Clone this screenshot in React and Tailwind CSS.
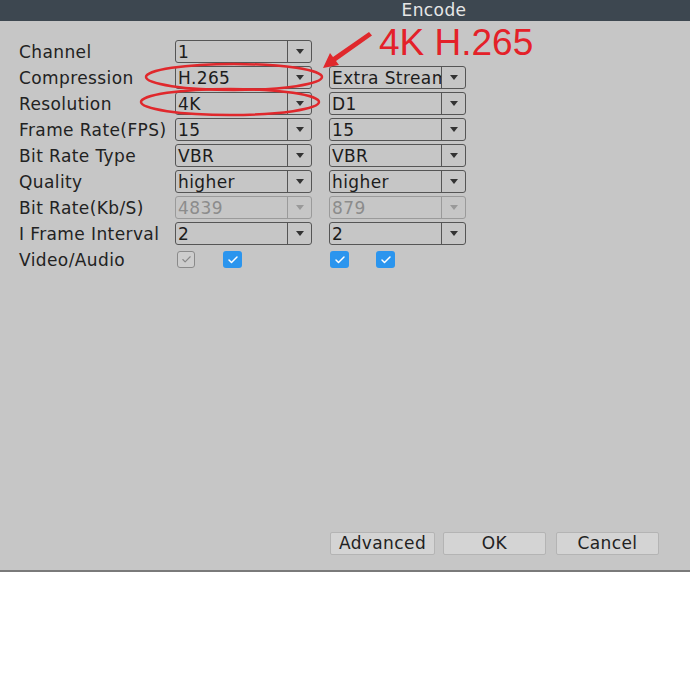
import { Check } from 'lucide-react'

const font = { fontFamily: '"DejaVu Sans", Verdana, sans-serif' }

const rows = [
  { label: 'Channel', a: '1', b: null },
  { label: 'Compression', a: 'H.265', b: 'Extra Stream' },
  { label: 'Resolution', a: '4K', b: 'D1' },
  { label: 'Frame Rate(FPS)', a: '15', b: '15' },
  { label: 'Bit Rate Type', a: 'VBR', b: 'VBR' },
  { label: 'Quality', a: 'higher', b: 'higher' },
  { label: 'Bit Rate(Kb/S)', a: '4839', b: '879', disabled: true },
  { label: 'I Frame Interval', a: '2', b: '2' },
]

function Select({ value, disabled }) {
  return (
    <div
      className={`flex h-[23px] w-[137px] rounded-[3px] border ${
        disabled ? 'border-[#9a9a9a] text-[#8c8c8c]' : 'border-[#555] text-[#1c1c1c]'
      }`}
    >
      <div className="flex-1 overflow-hidden whitespace-nowrap pl-[2px] leading-[22px]">{value}</div>
      <div
        className={`flex w-[24px] items-center justify-center border-l ${
          disabled ? 'border-[#9a9a9a]' : 'border-[#555]'
        }`}
      >
        <svg width="8" height="5" viewBox="0 0 8 5">
          <path d="M0 0 L8 0 L4 5 Z" fill={disabled ? '#999' : '#333'} />
        </svg>
      </div>
    </div>
  )
}

function Box({ on }) {
  return on ? (
    <div className="flex h-[17px] w-[19px] items-center justify-center rounded-[3px] bg-[#2b95ee]">
      <Check className="h-[12px] w-[12px] text-white" strokeWidth={3} />
    </div>
  ) : (
    <div className="flex h-[17px] w-[18px] items-center justify-center rounded-[3px] border border-[#8a8a8a] bg-[#cdcdcd]">
      <Check className="h-[11px] w-[11px] text-[#888]" strokeWidth={2.5} />
    </div>
  )
}

export default function App() {
  return (
    <div className="relative h-[690px] w-[690px] bg-white text-[17px] tracking-[0.4px]" style={font}>
      <div className="flex h-[21px] items-center justify-center bg-[#3d4750] pl-[178px] text-[17px] leading-none text-[#e6e6e6]">
        Encode
      </div>

      <div className="flex h-[549px] flex-col bg-[#c6c6c6] pt-[19px]">
        <div className="flex flex-col gap-[3px]">
          {rows.map((r) => (
            <div key={r.label} className="flex h-[23px] items-center">
              <div className="w-[175px] pl-[19px] leading-[24px] text-[#222]">{r.label}</div>
              <Select value={r.a} disabled={r.disabled} />
              {r.b && (
                <div className="ml-[17px]">
                  <Select value={r.b} disabled={r.disabled} />
                </div>
              )}
            </div>
          ))}
          <div className="flex h-[23px] items-center">
            <div className="w-[175px] pl-[19px] leading-[24px] text-[#222]">Video/Audio</div>
            <div className="flex w-[137px] gap-[28px] pl-[2px]">
              <Box on={false} />
              <Box on />
            </div>
            <div className="ml-[17px] flex gap-[27px] pl-[1px]">
              <Box on />
              <Box on />
            </div>
          </div>
        </div>

        <div className="flex-1" />

        <div className="flex justify-end pb-[15px] pr-[31px] text-[#222]">
          <button className="h-[23px] w-[105px] rounded-[2px] border border-[#b4b4b4] bg-[#d4d4d4] leading-none">
            Advanced
          </button>
          <button className="ml-[8px] h-[23px] w-[103px] rounded-[2px] border border-[#b4b4b4] bg-[#d4d4d4] leading-none">
            OK
          </button>
          <button className="ml-[10px] h-[23px] w-[103px] rounded-[2px] border border-[#b4b4b4] bg-[#d4d4d4] leading-none">
            Cancel
          </button>
        </div>
      </div>
      <div className="h-[2px] bg-[#7a7a7a]" />

      {/* red annotation over the dialog */}
      <svg className="pointer-events-none absolute left-0 top-0" width="690" height="140">
        <ellipse cx="234" cy="77" rx="88" ry="13" fill="none" stroke="#e0282c" strokeWidth="2.5" />
        <ellipse cx="230" cy="102" rx="89" ry="13" fill="none" stroke="#e0282c" strokeWidth="2.5" />
        <path d="M369 32 L372 35.5 L336 61 L339 65 L323 68 L330 53 L333 57 Z" fill="#e0282c" />
      </svg>
      <div
        className="absolute left-[379px] top-[24px] text-[37px] leading-none tracking-normal text-[#e42129]"
        style={{ fontFamily: '"Liberation Sans", Arial, sans-serif' }}
      >
        4K H.265
      </div>
    </div>
  )
}
